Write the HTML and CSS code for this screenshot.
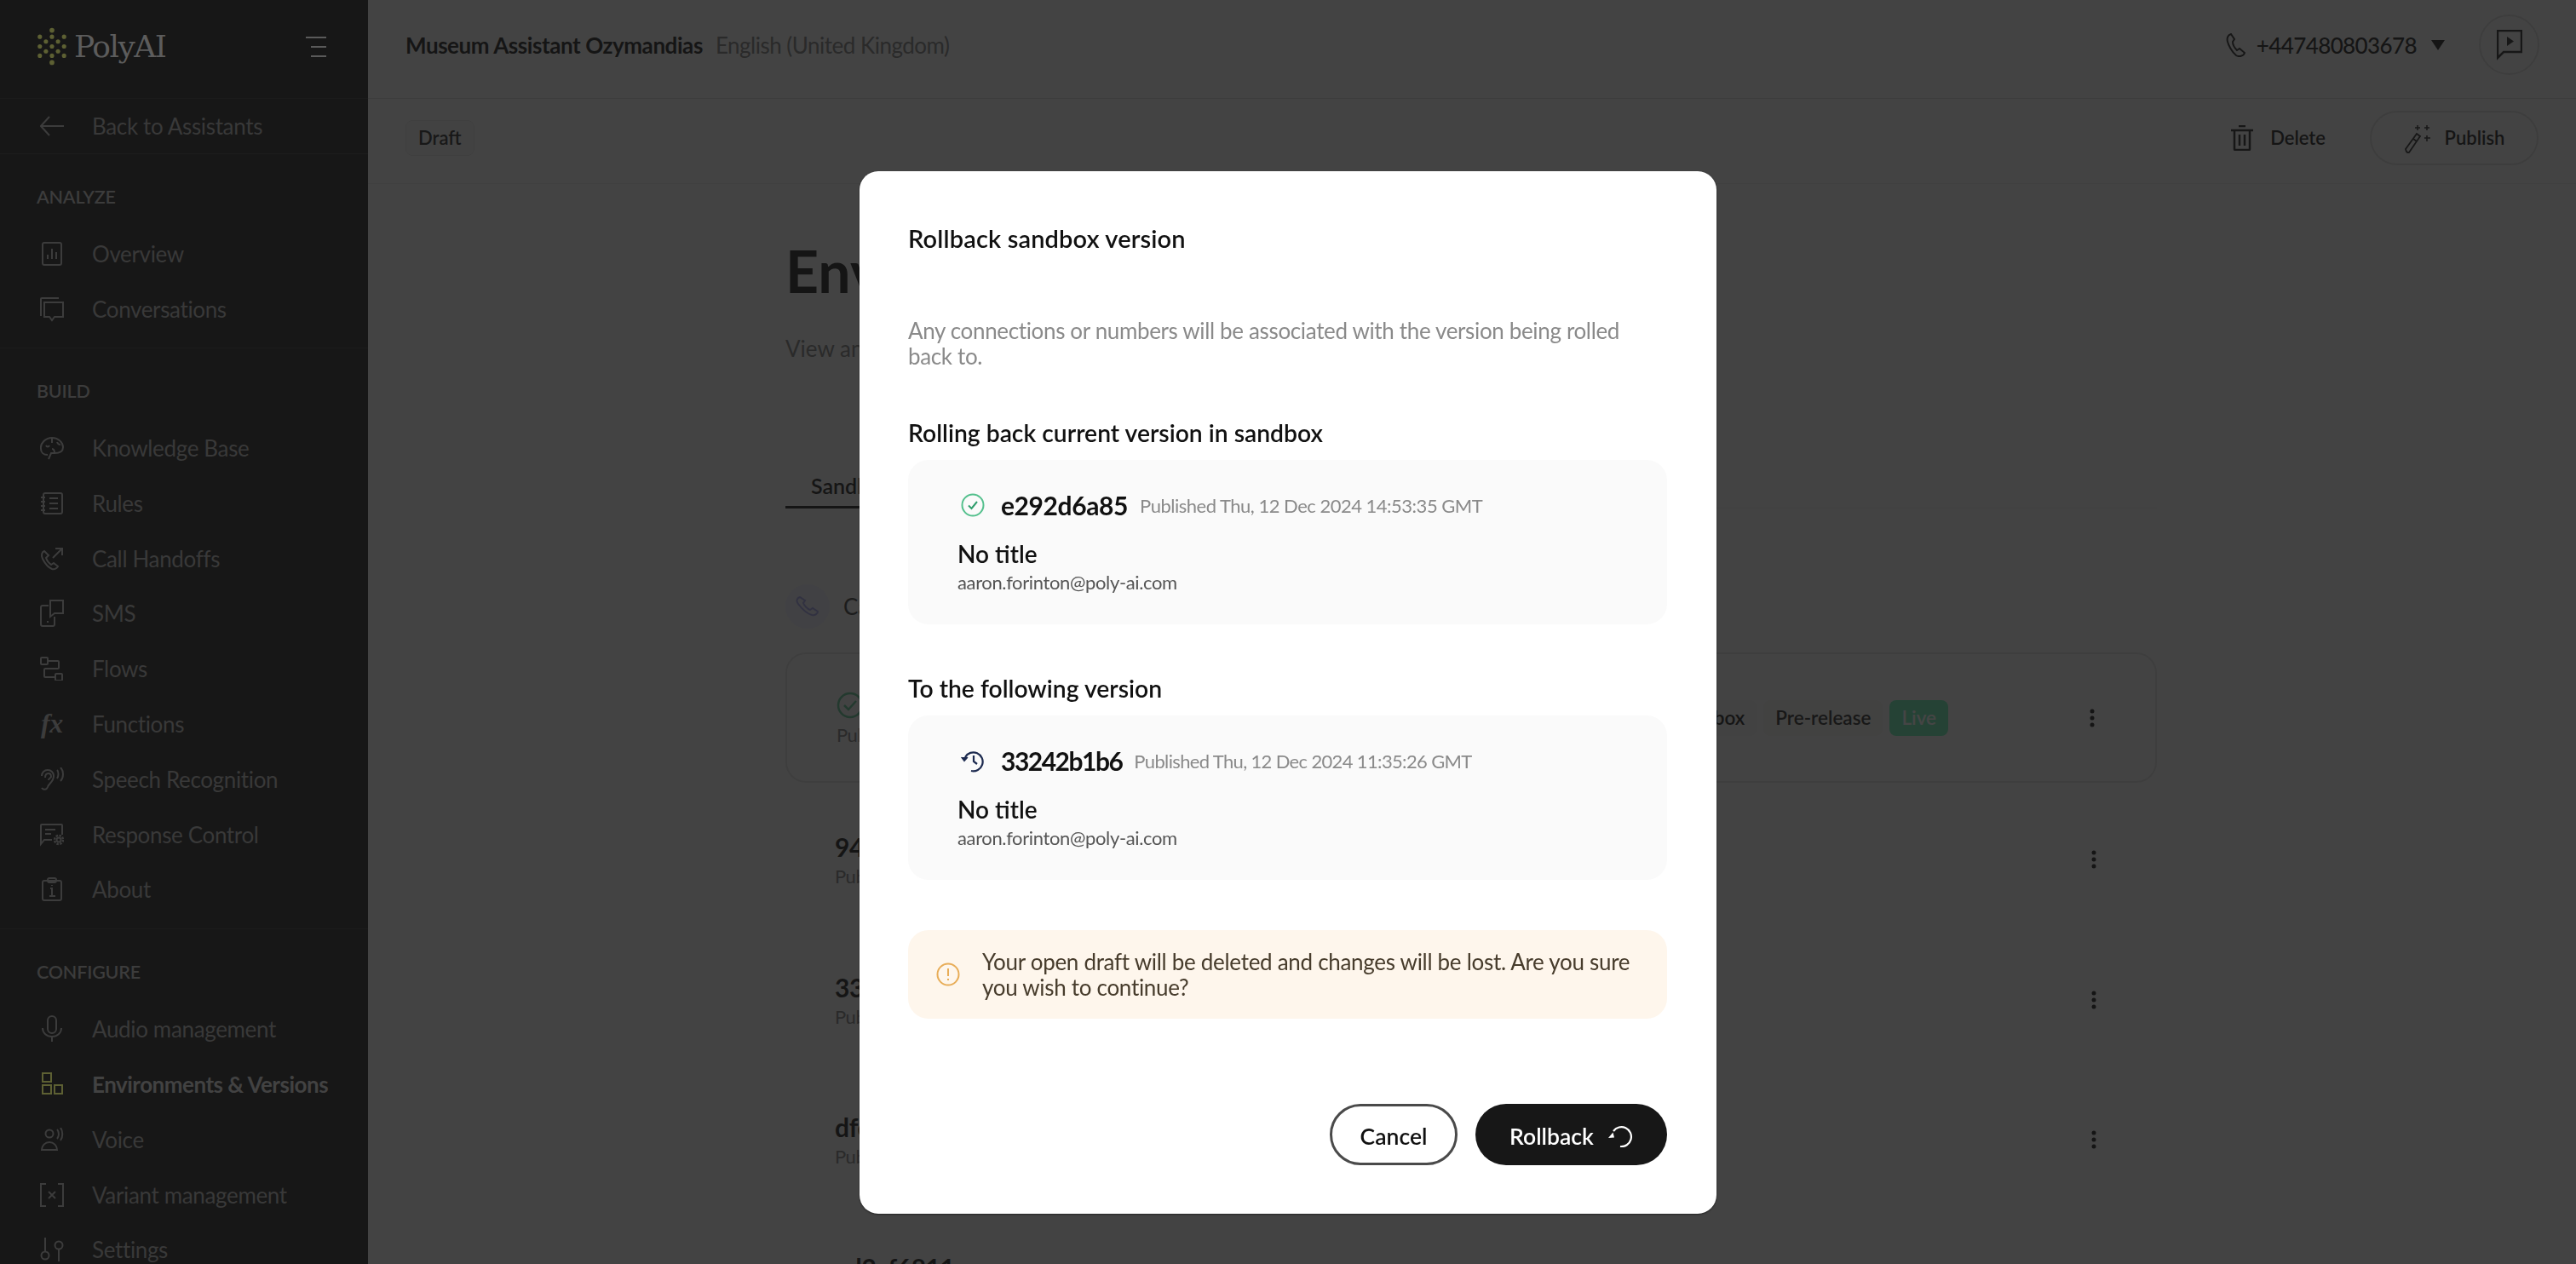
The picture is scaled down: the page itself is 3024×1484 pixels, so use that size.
FILE: index.html
```html
<!DOCTYPE html>
<html lang="en">
<head>
<meta charset="utf-8">
<title>Environments &amp; Versions</title>
<link rel="stylesheet" href="styles.css">
</head>
<body>
<div class="app">
  <aside class="sidebar">
    <div class="logo-row">
      <div class="logo">
        <svg class="logo-mark" viewBox="0 0 38 46" width="36" height="45" fill="#5d6033">
          <circle cx="19" cy="3" r="3"/>
          <circle cx="4" cy="11" r="2.700"/><circle cx="19" cy="11" r="2.700"/><circle cx="34" cy="11" r="2.700"/>
          <circle cx="11.500" cy="17" r="2.700"/><circle cx="26.500" cy="17" r="2.700"/>
          <circle cx="4" cy="23" r="2.700"/><circle cx="19" cy="23" r="2.700"/><circle cx="34" cy="23" r="2.700"/>
          <circle cx="11.500" cy="29" r="2.700"/><circle cx="26.500" cy="29" r="2.700"/>
          <circle cx="4" cy="34.500" r="2.700"/><circle cx="19" cy="34.500" r="2.700"/><circle cx="34" cy="34.500" r="2.700"/>
          <circle cx="19" cy="43" r="3"/>
        </svg>
        <span class="logo-text">PolyAI</span>
      </div>
      <svg class="collapse" viewBox="0 0 24 24" width="24" height="24" fill="none" stroke="#5a5a5a" stroke-width="2"><path d="M0 1h24M6 12h18M6 23h18"/></svg>
    </div>
    <a class="nav-item back">
      <svg class="ico" viewBox="0 0 28 24"><path d="M28 12H1M11 1 1 12l10 11"/></svg>
      <span>Back to Assistants</span>
    </a>
    <section class="nav-section analyze">
      <h2>ANALYZE</h2>
      <a class="nav-item"><svg class="ico" viewBox="0 0 28 28"><rect x="3" y="1" width="22" height="26" rx="2"/><path d="M9 20v-5M14 20V8M19 20v-8"/></svg><span>Overview</span></a>
      <a class="nav-item"><svg class="ico" viewBox="0 0 28 30"><path d="M1 23V3q0-1 1-1h20"/><path d="M5 7h22v17H17l-3 4-3-4H5z"/></svg><span>Conversations</span></a>
    </section>
    <section class="nav-section build">
      <h2>BUILD</h2>
      <a class="nav-item"><svg class="ico" viewBox="0 0 28 28"><path d="M9 22c-5 0-8-3-8-7-1-6 5-13 13-13s13 6 13 11c0 5-4 7-10 7l-4 0-3 7"/><path d="M7 11c1 2 3 2 4 0M14 2v6M20 7c1 3 3 3 4 3M14 15c2 0 3 1 3 5"/></svg><span>Knowledge Base</span></a>
      <a class="nav-item"><svg class="ico" viewBox="0 0 28 28"><rect x="4" y="2" width="22" height="24" rx="2"/><path d="M11 8h10M11 14h10M11 20h10M1 7h5M1 12h5M1 17h5M1 22h5"/></svg><span>Rules</span></a>
      <a class="nav-item"><svg class="ico" viewBox="0 0 28 28"><path d="M5 5c-3 1-4 5-2 9s6 10 11 12c3 1 6-1 7-3l-5-4-3 2c-3-2-5-5-6-8l3-3z"/><path d="M15 13 26 2M18 2h8v8"/></svg><span>Call Handoffs</span></a>
      <a class="nav-item"><svg class="ico" viewBox="0 0 28 32"><path d="M10 7H3q-2 0-2 2v20q0 2 2 2h12q2 0 2-2V20"/><path d="M12 1h15v15H17l-5 4z"/><path d="M8 26h2"/></svg><span>SMS</span></a>
      <a class="nav-item"><svg class="ico" viewBox="0 0 28 28"><rect x="1" y="1" width="8" height="8" rx="1"/><rect x="18" y="20" width="8" height="8" rx="1"/><path d="M9 5h12q1 0 1 1v7q0 1-1 1H6q-1 0-1 1v8q0 1 1 1h12"/></svg><span>Flows</span></a>
      <a class="nav-item"><span class="fx">fx</span><span>Functions</span></a>
      <a class="nav-item"><svg class="ico" viewBox="0 0 28 28"><path d="M2 24c2 3 6 2 7-1 1-4 7-6 7-13 0-4-3-7-7-7s-7 3-7 7"/><path d="M6 12c0-3 1-5 4-5s3 3 3 4-3 2-3 4"/><path d="M20 3c2 2 2 7 0 10M24 0c4 4 4 12 0 16"/></svg><span>Speech Recognition</span></a>
      <a class="nav-item"><svg class="ico" viewBox="0 0 28 28"><path d="M14 20H5l-4 5V3q0-1 1-1h23q1 0 1 1v11"/><path d="M6 8h12M6 13h7"/><circle cx="22" cy="20" r="2.500"/><circle cx="22" cy="20" r="5" stroke-dasharray="2.500 1.400" stroke-width="2.500"/></svg><span>Response Control</span></a>
      <a class="nav-item"><svg class="ico" viewBox="0 0 28 28"><rect x="3" y="4" width="22" height="23" rx="2"/><rect x="9" y="1" width="10" height="5" rx="2"/><path d="M12 13h2v9M11 22h7M14 9v1"/></svg><span>About</span></a>
    </section>
    <section class="nav-section configure">
      <h2>CONFIGURE</h2>
      <a class="nav-item"><svg class="ico" viewBox="0 0 28 32"><rect x="9" y="1" width="10" height="20" rx="5"/><path d="M3 15c0 6 5 10 11 10s11-4 11-10M14 25v6"/></svg><span>Audio management</span></a>
      <a class="nav-item active"><svg class="ico" viewBox="0 0 28 28"><rect x="3" y="1" width="10" height="10"/><rect x="3" y="15" width="10" height="10"/><rect x="17" y="15" width="9" height="10"/></svg><span>Environments &amp; Versions</span></a>
      <a class="nav-item"><svg class="ico" viewBox="0 0 28 28"><circle cx="11" cy="7" r="4.500"/><path d="M2 26c0-5 4-9 9-9s9 4 9 9z"/><path d="M20 2c2 2 3 8 0 11M24 0c3 4 3 11 0 15"/></svg><span>Voice</span></a>
      <a class="nav-item"><svg class="ico" viewBox="0 0 28 28"><path d="M7 1H1v26h6M21 1h6v26h-6M10 10l8 8M18 10l-8 8"/></svg><span>Variant management</span></a>
      <a class="nav-item"><svg class="ico" viewBox="0 0 28 28"><path d="M6 0v17M22 14v14"/><circle cx="6" cy="21" r="4.500"/><circle cx="22" cy="9" r="4.500"/></svg><span>Settings</span></a>
    </section>
  </aside>

  <main class="main">
    <header class="topbar">
      <div class="assistant"><strong>Museum Assistant Ozymandias</strong><span>English (United Kingdom)</span></div>
      <div class="top-right">
        <svg class="phone" viewBox="0 0 24 28" width="24" height="28" fill="none" stroke="#1b1b1b" stroke-width="2"><path d="M6 1C2 2 1 6 2 10s5 12 10 16c3 2 9 1 10-3l-6-5-3 2c-3-3-5-7-5-10l2-3z"/></svg>
        <span class="number">+447480803678</span>
        <span class="caret"></span>
        <button class="round-btn"><svg viewBox="0 0 30 36" width="30" height="36" fill="none" stroke="#1b1b1b" stroke-width="2.500"><path d="M1 1h28v25H8l-7 7z"/><path d="M12 8v11l8-5.500z" fill="#1b1b1b" stroke="none"/></svg></button>
      </div>
    </header>
    <div class="actionbar">
      <span class="badge draft">Draft</span>
      <div class="actions">
        <button class="ghost"><svg viewBox="0 0 26 30" width="26" height="30" fill="none" stroke="#1b1b1b" stroke-width="2.500"><path d="M0 6h26M9 1h8M4 6v22q0 1 1 1h16q1 0 1-1V6M10 11v13M16 11v13"/></svg><span>Delete</span></button>
        <button class="publish"><svg viewBox="0 0 32 36" width="32" height="36" fill="none" stroke="#1b1b1b" stroke-width="1.800"><path d="M2 31 15 13l4 3L6 35q-3 1-4-4zM11 19l4 3"/><path d="M16 3v6M13 6h6M27 3v6M24 6h6M27 15v7M24 18h7" stroke-width="1.500"/></svg><span>Publish</span></button>
      </div>
    </div>
    <div class="content">
      <h1>Environments &amp; Versions</h1>
      <p class="sub">View and manage your environments and versions.</p>
      <nav class="tabs"><a class="tab current">Sandbox</a><a class="tab">Pre-release</a><a class="tab">Live</a></nav>
      <div class="channel">
        <span class="channel-ico"><svg viewBox="0 0 28 24" width="28" height="24" fill="none" stroke="#9c9ce8" stroke-width="2"><path d="M5 1C2 2 0 5 3 9s9 11 16 13c4 1 7-2 7-4l-6-4-3 2c-3-1-7-5-8-8l2-3z"/></svg></span>
        <span>Calls</span>
      </div>
      <div class="versions">
        <article class="version first">
          <div class="v-main">
            <div class="v-head"><svg viewBox="0 0 32 32" width="32" height="32" fill="none" stroke="#54c08d" stroke-width="2.500"><circle cx="16" cy="16" r="14"/><path d="M9 16l5 5 9-10"/></svg><b>e292d6a85</b></div>
            <div class="v-date">Published Thu, 12 Dec 2024 14:53:35 GMT</div>
          </div>
          <div class="v-tags"><span class="tag">Sandbox</span><span class="tag pre">Pre-release</span><span class="tag live">Live</span></div>
          <svg class="dots" viewBox="0 0 6 22" width="6" height="22" fill="#111"><circle cx="3" cy="3" r="2.500"/><circle cx="3" cy="11" r="2.500"/><circle cx="3" cy="19" r="2.500"/></svg>
        </article>
        <article class="version">
          <div class="v-main"><b>94c1e07ab</b><div class="v-date">Published Thu, 12 Dec 2024 13:02:11 GMT</div></div>
          <svg class="dots" viewBox="0 0 6 22" width="6" height="22" fill="#111"><circle cx="3" cy="3" r="2.500"/><circle cx="3" cy="11" r="2.500"/><circle cx="3" cy="19" r="2.500"/></svg>
        </article>
        <article class="version">
          <div class="v-main"><b>33242b1b6</b><div class="v-date">Published Thu, 12 Dec 2024 11:35:26 GMT</div></div>
          <svg class="dots" viewBox="0 0 6 22" width="6" height="22" fill="#111"><circle cx="3" cy="3" r="2.500"/><circle cx="3" cy="11" r="2.500"/><circle cx="3" cy="19" r="2.500"/></svg>
        </article>
        <article class="version">
          <div class="v-main"><b>dfc83a7d2</b><div class="v-date">Published Wed, 11 Dec 2024 16:20:48 GMT</div></div>
          <svg class="dots" viewBox="0 0 6 22" width="6" height="22" fill="#111"><circle cx="3" cy="3" r="2.500"/><circle cx="3" cy="11" r="2.500"/><circle cx="3" cy="19" r="2.500"/></svg>
        </article>
        <article class="version">
          <div class="v-main"><b>ad2cf6811</b><div class="v-date">Published Wed, 11 Dec 2024 12:41:07 GMT</div></div>
        </article>
      </div>
    </div>
  </main>
</div>

<div class="overlay">
  <div class="modal">
    <h3 class="modal-title">Rollback sandbox version</h3>
    <p class="modal-desc">Any connections or numbers will be associated with the version being rolled back to.</p>
    <h4 class="card-label first-label">Rolling back current version in sandbox</h4>
    <div class="r-card">
      <div class="r-head">
        <svg class="r-ico" viewBox="0 0 28 28" width="28" height="28" fill="none" stroke="#54c08d" stroke-width="2"><circle cx="14" cy="14" r="12.500"/><path d="M9 14.500l3.500 3.500 6.500-8" stroke="#2f9d6c"/></svg>
        <b class="hash-a">e292d6a85</b><span>Published Thu, 12 Dec 2024 14:53:35 GMT</span>
      </div>
      <div class="r-title">No title</div>
      <div class="r-mail">aaron.forinton@poly-ai.com</div>
    </div>
    <h4 class="card-label second-label">To the following version</h4>
    <div class="r-card">
      <div class="r-head">
        <svg class="r-ico" viewBox="0 0 28 28" width="28" height="28" fill="none" stroke="#1c2a4f" stroke-width="2.200"><path d="M5 10A11 11 0 1 1 12 26"/><path d="M0.500 10 4 14.500 8 10" fill="#1c2a4f" stroke-width="1.200"/><path d="M15 8v7l4 3"/></svg>
        <b class="hash-b">33242b1b6</b><span>Published Thu, 12 Dec 2024 11:35:26 GMT</span>
      </div>
      <div class="r-title">No title</div>
      <div class="r-mail">aaron.forinton@poly-ai.com</div>
    </div>
    <div class="alert">
      <svg viewBox="0 0 28 28" width="28" height="28" fill="none" stroke="#e8ad58" stroke-width="2"><circle cx="14" cy="14" r="12.500"/><path d="M14 7v9M14 19v2"/></svg>
      <p>Your open draft will be deleted and changes will be lost. Are you sure you wish to continue?</p>
    </div>
    <div class="modal-actions">
      <button class="btn cancel">Cancel</button>
      <button class="btn rollback">Rollback<svg viewBox="0 0 30 26" width="30" height="26" fill="none" stroke="#fff" stroke-width="2.200"><path d="M7 7A11.500 11.500 0 1 1 15 25"/><path d="M1 15l7-.5-1.500-6z" fill="#fff" stroke="none"/></svg></button>
    </div>
  </div>
</div>
</body>
</html>
```
FILE: styles.css
```css
* { box-sizing: border-box; }
html, body { margin: 0; height: 100%; overflow: hidden; }
body { font-family: "Lato", "Liberation Sans", sans-serif; color: #111; background: #f5f5f5; }
button { font-family: inherit; background: none; border: 0; padding: 0; }
h1, h2, h3, h4, p { margin: 0; font-weight: inherit; }

.app { display: flex; height: 1484px; overflow: hidden; }

/* Sidebar: sits above the dimming layer, so its colours are the final ones */
.sidebar { position: relative; z-index: 2; width: 432px; flex: none; background: #171717; height: 1484px; overflow: hidden; }
.logo-row { height: 116px; display: flex; align-items: center; justify-content: space-between; padding: 0 49px 6px 43px; border-bottom: 1px solid #1c1c1c; }
.logo { display: flex; align-items: center; gap: 8px; }
.logo-text { font-family: "DejaVu Serif", serif; font-size: 36px; color: #5c5c5c; letter-spacing: -1.500px; }
.nav-item { height: 64.800px; display: flex; align-items: center; gap: 33px; padding-left: 47px; font-size: 26px; letter-spacing: -0.350px; color: #393939; }
.nav-item .ico { width: 28px; height: auto; flex: none; fill: none; stroke: #3c3c3c; stroke-width: 2; }
.fx { width: 28px; flex: none; font-family: "Liberation Serif", serif; font-style: italic; font-weight: 700; font-size: 32px; color: #3c3c3c; text-align: center; }
.back { height: 65px; border-bottom: 1px solid #1c1c1c; }
.nav-section h2 { font-size: 21.500px; font-weight: 600; letter-spacing: -0.200px; color: #3c3c3c; padding-left: 43px; margin-bottom: 22px; }
.nav-section { border-bottom: 1px solid #1c1c1c; }
.analyze { padding: 37px 0 12px; }
.build { padding: 37px 0 13px; }
.configure { padding: 37px 0 0; border: 0; }
.active { font-weight: 700; color: #424242; letter-spacing: -0.500px; }
.active .ico { stroke: #5d6033; }

/* Main */
.main { flex: 1; min-width: 0; }
.topbar { height: 116px; display: flex; align-items: center; justify-content: space-between; padding: 0 43px 10px 44px; border-bottom: 1px solid #d0d0d0; }
.assistant { font-size: 26px; display: flex; gap: 15px; }
.assistant strong { font-weight: 700; letter-spacing: -0.430px; }
.assistant span { color: #777; letter-spacing: -0.500px; }
.top-right { display: flex; align-items: center; font-size: 26px; font-weight: 500; }
.number { margin-left: 12px; letter-spacing: -0.600px; }
.caret { margin: 0 40px 0 17px; width: 0; height: 0; border: 8px solid transparent; border-top: 12px solid #111; border-bottom: 0; }
.round-btn { width: 71px; height: 71px; border: 2px solid #d8d8d8; border-radius: 50%; display: flex; align-items: center; justify-content: center; }
.actionbar { height: 100px; display: flex; align-items: center; justify-content: space-between; padding: 0 44px 8px; border-bottom: 1px solid #e4e4e4; }
.badge.draft { height: 42px; padding: 0 14px; display: flex; align-items: center; font-size: 22px; font-weight: 600; color: #222; background: #f0f0f0; border: 1px solid #e0e0e0; border-radius: 8px; }
.actions { display: flex; align-items: center; gap: 52px; }
.ghost, .publish { display: flex; align-items: center; font-size: 22px; font-weight: 600; color: #111; }
.ghost { gap: 20px; }
.publish { gap: 16px; height: 64px; width: 198px; justify-content: center; border: 2px solid #d8d8d8; border-radius: 32px; }

.content { padding: 0 0 0 490px; width: 2100px; }
.content h1 { font-size: 68px; font-weight: 700; line-height: 80px; margin-top: 62px; white-space: nowrap; }
.sub { font-size: 26px; color: #777; margin-top: 35px; }
.tabs { display: flex; height: 61px; margin-top: 111px; border-bottom: 1px solid #e4e4e4; }
.tab { padding: 0 32px 0 30px; font-size: 25px; font-weight: 600; height: 61px; line-height: 68px; }
.current { border-bottom: 3px solid #111; }
.channel { display: flex; align-items: center; gap: 16px; margin-top: 89px; font-size: 26px; color: #333; }
.channel-ico { width: 52px; height: 52px; border-radius: 50%; background: #e8e8f8; display: flex; align-items: center; justify-content: center; }
.versions { margin-top: 28px; }
.version { height: 164.500px; display: flex; align-items: center; padding: 0 71px 0 58px; }
.version.first { height: 153px; border: 2px solid #dcdcdc; border-radius: 24px; margin-bottom: 8px; }
.v-main { flex: 1; }
.v-main b { font-size: 30px; font-weight: 700; letter-spacing: -0.400px; }
.v-head { display: flex; align-items: center; gap: 10px; }
.v-date { font-size: 22px; letter-spacing: -0.500px; color: #777; margin-top: 3px; }
.v-tags { display: flex; gap: 8px; margin-right: 166px; }
.tag { height: 42px; padding: 0 14px; display: flex; align-items: center; font-size: 22.500px; font-weight: 600; background: #ededed; border-radius: 8px; }
.tag.pre { color: #222; background: #f0efe8; }
.tag.live { color: #fff; background: #60f0b0; }

/* Modal */
.overlay { position: fixed; inset: 0; background: rgba(23, 23, 23, .8); display: flex; justify-content: center; align-items: flex-start; padding-top: 201px; }
.modal { width: 1006px; height: 1224px; background: #fff; border-radius: 22px; padding: 58px 58px 0 57px; display: flex; flex-direction: column; box-shadow: 0 1px 2px rgba(0, 0, 0, .5); }
.modal-title { font-size: 29px; font-weight: 600; letter-spacing: 0.150px; line-height: 42px; color: #111; }
.modal-desc { font-size: 26px; letter-spacing: -0.350px; line-height: 30px; color: #8a8a8a; margin-top: 72px; width: 870px; }
.card-label { font-size: 28.300px; font-weight: 600; line-height: 36px; color: #111; }
.first-label { margin-top: 57px; }
.second-label { margin-top: 57px; }
.r-card { height: 193px; margin-top: 14px; background: #fafafa; border-radius: 24px; padding: 35px 58px; }
.r-head { display: flex; align-items: center; height: 36px; }
.r-ico { margin: 0 19px 0 4px; flex: none; }
.r-head b { font-size: 30px; font-weight: 700; }
.hash-a { letter-spacing: -0.400px; }
.hash-b { letter-spacing: -1.500px; }
.r-head span { font-size: 22px; letter-spacing: -0.500px; color: #8a8a8a; margin-left: 14px; }
.r-head .hash-b + span { letter-spacing: -0.650px; }
.r-title { font-size: 28px; font-weight: 600; margin-top: 21px; line-height: 36px; }
.r-mail { font-size: 22px; letter-spacing: -0.370px; color: #555; line-height: 32px; }
.alert { height: 104px; margin-top: 59px; background: #fef6ec; border-radius: 24px; display: flex; align-items: center; gap: 26px; padding: 0 30px 0 33px; }
.alert svg { flex: none; }
.alert p { font-size: 26px; letter-spacing: -0.300px; line-height: 30px; color: #473c2c; }
.modal-actions { display: flex; justify-content: flex-end; gap: 21px; margin-top: 100px; }
.btn { height: 72px; border-radius: 36px; font-size: 26.500px; font-weight: 600; display: flex; align-items: center; justify-content: center; padding-top: 3px; }
.cancel { width: 150px; border: 3px solid #4a4a4a; color: #111; background: #fff; }
.rollback { width: 225px; background: #171717; color: #fff; gap: 16px; }
```
